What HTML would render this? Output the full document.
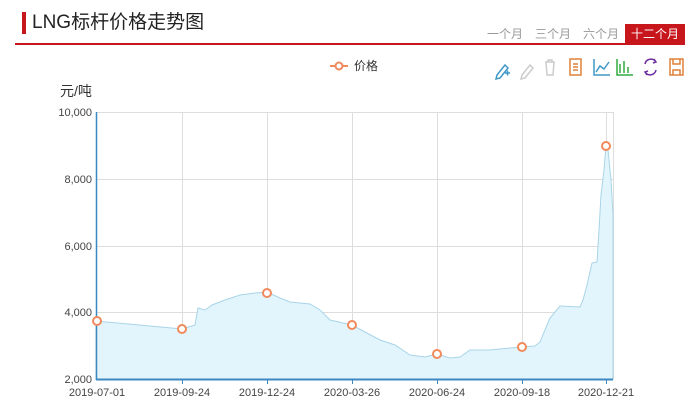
<!DOCTYPE html><html><head><meta charset="utf-8"><style>
body{margin:0;width:700px;height:415px;background:#fff;font-family:"Liberation Sans","Noto Sans CJK SC",sans-serif;position:relative;overflow:hidden}
.t{position:absolute;left:22px;top:12px;font-size:19px;color:#222;border-left:4px solid #c8161d;padding-left:6px;line-height:22px}
.line{position:absolute;left:15px;top:43px;width:670px;height:2px;background:#c8161d}
.tabs{position:absolute;right:15px;top:24px;display:flex;font-size:12px;color:#999}
.tabs span{padding:0 6px;line-height:20px}
.tabs .a{background:#c8161d;color:#fff}
</style></head><body>
<div class="t">LNG标杆价格走势图</div>
<div class="tabs"><span>一个月</span><span>三个月</span><span>六个月</span><span class="a">十二个月</span></div>
<div class="line"></div>
<svg width="700" height="415" style="position:absolute;left:0;top:0" font-family="Liberation Sans, Noto Sans CJK SC, sans-serif">
<g stroke="#f08a5d" stroke-width="2" fill="#fff"><line x1="330" y1="66" x2="348" y2="66"/><circle cx="339" cy="66" r="3.5"/></g>
<text x="354" y="70" font-size="12" fill="#333">价格</text>
<g fill="none" stroke-width="1.5">
<path d="M497 75 l8-10 3 3-8 10-4 1z M505 73h5 M507.5 70.5v5" stroke="#3e98c5"/>
<path d="M522 75 l8-10 3 3-8 10-4 1z" stroke="#ccc"/>
<path d="M545 62h10 M548 62v-2h4v2 M546 62l1 13h6l1-13" stroke="#ccc"/>
<rect x="570" y="59" width="11" height="16" stroke="#e0803a"/><path d="M573 64h5M573 67h5M573 70h5" stroke="#e0803a"/>
<path d="M594 59v16h16 M596 72l4-6 4 3 5-7" stroke="#3e98c5"/>
<path d="M617 59v16h16 M620 73v-9 M624 73v-12 M628 73v-6" stroke="#2eac3e"/>
<path d="M645 64a6 6 0 0 1 11-2 M656 70a6 6 0 0 1-11 2 M654 59l2 3-3 1 M647 75l-2-3 3-1" stroke="#6c2ea0"/>
<rect x="670" y="59" width="13" height="16" stroke="#e0803a"/><path d="M673 59v5h7v-5 M673 75v-5h7v5" stroke="#e0803a"/>
</g>
<text x="60" y="96" font-size="14" fill="#333">元/吨</text>
<g stroke="#ddd" stroke-width="1">
<line x1="96" y1="112.5" x2="613" y2="112.5"/><line x1="96" y1="179.5" x2="613" y2="179.5"/><line x1="96" y1="246.5" x2="613" y2="246.5"/><line x1="96" y1="312.5" x2="613" y2="312.5"/>
<line x1="182.5" y1="112" x2="182.5" y2="379"/><line x1="267.5" y1="112" x2="267.5" y2="379"/><line x1="352.5" y1="112" x2="352.5" y2="379"/><line x1="437.5" y1="112" x2="437.5" y2="379"/><line x1="522.5" y1="112" x2="522.5" y2="379"/><line x1="606.5" y1="112" x2="606.5" y2="379"/><line x1="613.5" y1="112" x2="613.5" y2="379"/>
</g>
<path d="M96 321 L150 326 L182 329 L195 325 L198 308 L205 310 L212 305 L225 300 L240 295 L255 293 L267 292 L280 298 L290 302 L310 304 L320 310 L330 320 L352 325 L365 332 L380 340 L395 345 L410 355 L425 357 L437 354 L450 358 L460 357 L470 350 L490 350 L510 348 L522 347 L535 346 L540 342 L545 330 L550 318 L560 306 L580 307 L583 300 L587 285 L592 263 L597 262 L599 230 L601 195 L604 170 L606 146 L608 150 L611 180 L613 215 L613 379 L96 379Z" fill="#e3f5fc" stroke="#a8d4e8" stroke-width="1"/>
<line x1="96.5" y1="112" x2="96.5" y2="380" stroke="#3c88c0" stroke-width="1.5"/>
<line x1="96" y1="379.5" x2="613" y2="379.5" stroke="#3c88c0" stroke-width="2"/>
<g stroke="#3c88c0"><line x1="182.5" y1="379" x2="182.5" y2="384"/><line x1="267.5" y1="379" x2="267.5" y2="384"/><line x1="352.5" y1="379" x2="352.5" y2="384"/><line x1="437.5" y1="379" x2="437.5" y2="384"/><line x1="522.5" y1="379" x2="522.5" y2="384"/><line x1="606.5" y1="379" x2="606.5" y2="384"/></g>
<g stroke="#f08a5d" stroke-width="2" fill="#fff">
<circle cx="97" cy="321" r="4"/><circle cx="182" cy="329" r="4"/><circle cx="267" cy="293" r="4"/><circle cx="352" cy="325" r="4"/><circle cx="437" cy="354" r="4"/><circle cx="522" cy="347" r="4"/><circle cx="606" cy="146" r="4"/>
</g>
<g font-size="11" fill="#444" text-anchor="end">
<text x="92" y="116">10,000</text><text x="92" y="183">8,000</text><text x="92" y="250">6,000</text><text x="92" y="316">4,000</text><text x="92" y="383">2,000</text>
</g>
<g font-size="11" fill="#444" text-anchor="middle">
<text x="97" y="396">2019-07-01</text><text x="182" y="396">2019-09-24</text><text x="267" y="396">2019-12-24</text><text x="352" y="396">2020-03-26</text><text x="437" y="396">2020-06-24</text><text x="522" y="396">2020-09-18</text><text x="606" y="396">2020-12-21</text>
</g>
</svg>
</body></html>
